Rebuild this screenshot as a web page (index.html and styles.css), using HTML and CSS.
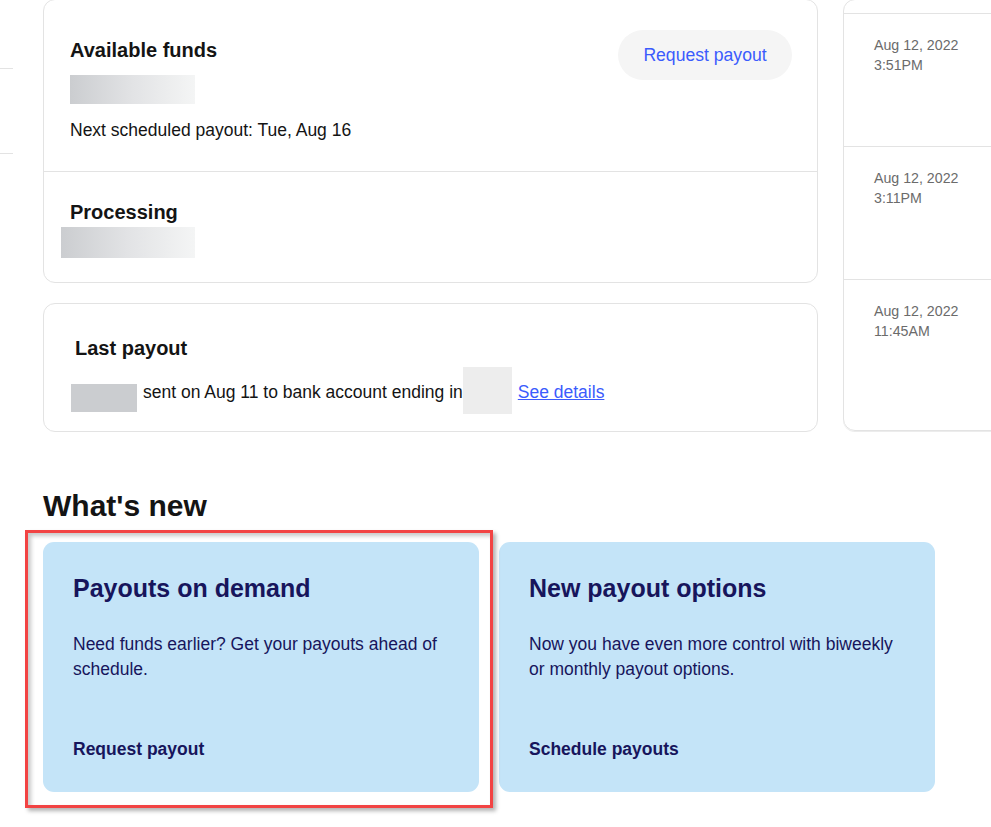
FILE: index.html
```html
<!DOCTYPE html>
<html lang="en">
<head>
<meta charset="utf-8">
<title>Payouts</title>
<link rel="stylesheet" href="styles.css">
</head>
<body>
<div class="layout">
  <aside class="sidebar">
    <div class="side-item side-item-1"></div>
    <div class="side-item side-item-2"></div>
  </aside>
  <main class="content">
    <div class="top-row">
      <div class="stack">
        <section class="card funds-card">
          <div class="funds-section">
            <div class="funds-info">
              <h2 class="card-title title-available">Available funds</h2>
              <div class="blur blur-available"></div>
              <p class="next-payout">Next scheduled payout: Tue, Aug 16</p>
            </div>
            <button class="pill-btn">Request payout</button>
          </div>
          <div class="processing-section">
            <h2 class="card-title">Processing</h2>
            <div class="blur blur-processing"></div>
          </div>
        </section>
        <section class="card last-card">
          <h2 class="card-title">Last payout</h2>
          <div class="last-row">
            <span class="mask mask-amount"></span>
            <span class="last-text">sent on Aug 11 to bank account ending in</span>
            <span class="mask mask-account"></span>
            <a class="details-link" href="#">See details</a>
          </div>
        </section>
      </div>
      <section class="timeline">
        <div class="tl-row tl-row-cut"></div>
        <div class="tl-row"><div class="tl-date">Aug 12, 2022<br>3:51PM</div></div>
        <div class="tl-row"><div class="tl-date">Aug 12, 2022<br>3:11PM</div></div>
        <div class="tl-row tl-row-last"><div class="tl-date">Aug 12, 2022<br>11:45AM</div></div>
      </section>
    </div>
    <section class="whats-new">
      <h1 class="wn-heading">What's new</h1>
      <div class="wn-cards">
        <article class="wn-card">
          <h3 class="wn-title">Payouts on demand</h3>
          <p class="wn-body">Need funds earlier? Get your payouts ahead of schedule.</p>
          <a class="wn-link" href="#">Request payout</a>
        </article>
        <article class="wn-card">
          <h3 class="wn-title">New payout options</h3>
          <p class="wn-body">Now you have even more control with biweekly or monthly payout options.</p>
          <a class="wn-link" href="#">Schedule payouts</a>
        </article>
      </div>
      <div class="highlight"></div>
    </section>
  </main>
</div>
</body>
</html>
```

FILE: styles.css
```css
* { box-sizing: border-box; }

html, body {
  margin: 0;
  padding: 0;
  background: #ffffff;
  overflow: hidden;
  height: 827px;
}

body {
  font-family: "Liberation Sans", Arial, sans-serif;
  color: #141414;
}

.layout {
  display: flex;
  align-items: flex-start;
}

.sidebar {
  width: 13px;
  flex: 0 0 13px;
  margin-right: 30px;
}

.side-item {
  border-bottom: 1px solid #e3e3e3;
}
.side-item-1 { height: 69px; }
.side-item-2 { height: 85px; }

.content {
  flex: 0 0 auto;
  width: 948px;
}

.top-row {
  display: flex;
  gap: 25px;
  align-items: flex-start;
  margin-top: -1px;
}

.stack {
  width: 775px;
  flex: 0 0 775px;
  display: flex;
  flex-direction: column;
  gap: 20px;
}

.card {
  border: 1px solid #e3e3e3;
  border-radius: 12px;
  background: #fff;
}

.card-title {
  margin: 0;
  font-size: 20px;
  line-height: 24px;
  font-weight: 700;
  color: #141414;
}

.funds-section {
  display: flex;
  justify-content: space-between;
  align-items: flex-start;
  padding: 30px 25px 30px 26px;
  border-bottom: 1px solid #e3e3e3;
}

.title-available { margin-top: 8px; }

.blur {
  background: linear-gradient(90deg, #cbcdd0 0%, #e2e3e5 50%, #f4f5f5 100%);
}

.blur-available {
  width: 125px;
  height: 29px;
  margin-top: 13px;
}

.next-payout {
  margin: 15px 0 0;
  font-size: 17.5px;
  line-height: 22px;
  color: #141414;
}

.pill-btn {
  width: 174px;
  height: 50px;
  border: none;
  border-radius: 25px;
  background: #f5f5f5;
  color: #3b5bfd;
  font-family: "Liberation Sans", Arial, sans-serif;
  font-size: 17.6px;
  padding: 0;
  cursor: pointer;
}

.processing-section {
  padding: 28px 26px 23px;
  height: 110px;
}

.blur-processing {
  width: 134px;
  height: 31px;
  margin-top: 3px;
  margin-left: -9px;
}

.last-card {
  padding: 32px 20px 17px 31px;
}

.last-row {
  display: flex;
  align-items: flex-start;
  margin-top: 7px;
  margin-left: -4px;
  height: 47px;
}

.mask { display: block; }

.mask-amount {
  width: 66px;
  height: 28px;
  margin-top: 17px;
  background: #cbcdd0;
  margin-right: 6px;
}

.last-text,
.details-link {
  font-size: 17.5px;
  line-height: 22px;
  margin-top: 14px;
}

.last-text { color: #141414; }

.mask-account {
  width: 49px;
  height: 47px;
  background: #ededed;
  margin-right: 6px;
}

.details-link {
  color: #3b5bfd;
  text-decoration: underline;
}

.timeline {
  width: 260px;
  flex: 0 0 260px;
  border: 1px solid #e3e3e3;
  border-radius: 12px;
  height: 432px;
  box-shadow: 0 1px 0 #ececec;
}

.tl-row {
  height: 133px;
  border-bottom: 1px solid #e3e3e3;
  padding: 21px 30px 0;
}

.tl-row-cut {
  height: 14px;
  padding: 0;
}

.tl-row-last {
  border-bottom: none;
  height: auto;
}

.tl-date {
  font-size: 14.2px;
  line-height: 20px;
  color: #6b6b6b;
}

.whats-new {
  position: relative;
  margin-top: 56px;
}

.wn-heading {
  margin: 0;
  font-size: 30px;
  line-height: 34px;
  font-weight: 700;
  color: #141414;
  padding-top: 1px;
  height: 34px;
}

.wn-cards {
  display: flex;
  gap: 20px;
  margin-top: 20px;
}

.wn-card {
  width: 436px;
  height: 250px;
  background: #c4e4f8;
  border-radius: 11px;
  padding: 31px 30px 30px;
  display: flex;
  flex-direction: column;
  color: #17155c;
}

.wn-title {
  margin: 0;
  font-size: 25px;
  line-height: 30px;
  font-weight: 700;
  color: #17155c;
}

.wn-body {
  margin: 29px 0 0;
  font-size: 17.5px;
  line-height: 25px;
  max-width: 376px;
}

.wn-link {
  margin-top: auto;
  font-size: 17.5px;
  line-height: 25px;
  font-weight: 700;
  color: #17155c;
  text-decoration: none;
}

.highlight {
  position: absolute;
  left: -18px;
  top: 42px;
  width: 468px;
  height: 278px;
  border: 3px solid #f24343;
  box-shadow: 3px 3px 4px rgba(0, 0, 0, 0.3), inset 3px 3px 4px rgba(0, 0, 0, 0.22);
  pointer-events: none;
}
```
